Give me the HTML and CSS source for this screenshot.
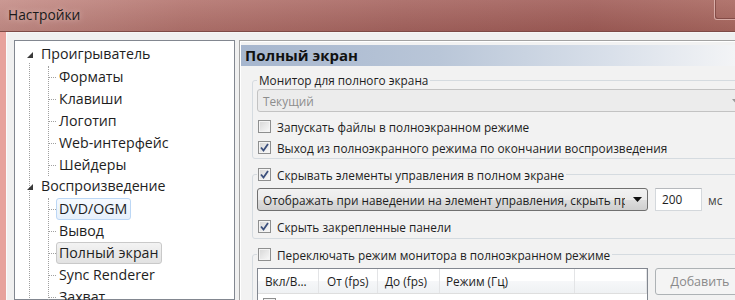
FILE: index.html
```html
<!DOCTYPE html>
<html lang="ru">

<head>
    <meta charset="UTF-8">
    <meta name="viewport" content="width=device-width, initial-scale=1.0">
    <title>Настройки</title>
    <link rel="stylesheet" href="styles.css">
</head>

<body>
    <div class="titlebar">
        <span class="title">Настройки</span>
        <span class="close"></span>
    </div>
    <div class="frame">
        <div class="client">
            <!-- дерево разделов -->
            <div class="tree">
                <div class="node root"><span class="exp"><svg width="6" height="6" viewBox="0 0 6 6"><polygon points="6,0 6,6 0,6" fill="#3a3a3a"/></svg></span><span class="label">Проигрыватель</span></div>
                <div class="children">
                    <div class="node"><span class="label">Форматы</span></div>
                    <div class="node"><span class="label">Клавиши</span></div>
                    <div class="node"><span class="label">Логотип</span></div>
                    <div class="node"><span class="label">Web-интерфейс</span></div>
                    <div class="node"><span class="label">Шейдеры</span></div>
                </div>
                <div class="node root"><span class="exp"><svg width="6" height="6" viewBox="0 0 6 6"><polygon points="6,0 6,6 0,6" fill="#3a3a3a"/></svg></span><span class="label">Воспроизведение</span></div>
                <div class="children">
                    <div class="node"><span class="label hot">DVD/OGM</span></div>
                    <div class="node"><span class="label">Вывод</span></div>
                    <div class="node"><span class="label sel">Полный экран</span></div>
                    <div class="node"><span class="label">Sync Renderer</span></div>
                    <div class="node"><span class="label">Захват</span></div>
                </div>
            </div>

            <!-- страница настроек -->
            <div class="page">
                <div class="head">Полный экран</div>

                <fieldset class="group first">
                    <legend class="caption">Монитор для полного экрана</legend>
                    <div class="combo disabled">
                        <span>Текущий</span>
                        <svg class="arrow" width="7" height="4" viewBox="0 0 7 4"><polygon points="0,0 7,0 3.5,4" fill="#9a9a9a"/></svg>
                    </div>
                    <div class="check"><span class="box"></span>Запускать файлы в полноэкранном режиме</div>
                    <div class="check"><span class="box"><svg width="11" height="11" viewBox="0 0 11 11"><path d="M2 5.5 L4.5 8.5 L9 2" fill="none" stroke="#3b4f7c" stroke-width="1.8"/></svg></span>Выход из полноэкранного режима по окончании воспроизведения</div>
                </fieldset>

                <fieldset class="group">
                    <legend class="check"><span class="box"><svg width="11" height="11" viewBox="0 0 11 11"><path d="M2 5.5 L4.5 8.5 L9 2" fill="none" stroke="#3b4f7c" stroke-width="1.8"/></svg></span>Скрывать элементы управления в полном экране</legend>
                    <div class="line">
                        <div class="combo">
                            <span class="text">Отображать при наведении на элемент управления, скрыть при</span>
                            <svg class="arrow" width="9" height="5" viewBox="0 0 9 5"><polygon points="0,0 9,0 4.5,5" fill="#111"/></svg>
                        </div>
                        <div class="edit">200</div>
                        <span class="unit">мс</span>
                    </div>
                    <div class="check"><span class="box"><svg width="11" height="11" viewBox="0 0 11 11"><path d="M2 5.5 L4.5 8.5 L9 2" fill="none" stroke="#3b4f7c" stroke-width="1.8"/></svg></span>Скрыть закрепленные панели</div>
                </fieldset>

                <fieldset class="group">
                    <legend class="check"><span class="box"></span>Переключать режим монитора в полноэкранном режиме</legend>
                    <div class="line">
                        <div class="list">
                            <div class="cols">
                                <span class="col c1">Вкл/В...</span>
                                <span class="col c2">От (fps)</span>
                                <span class="col c3">До (fps)</span>
                                <span class="col c4">Режим (Гц)</span>
                                <span class="col c5"></span>
                            </div>
                            <div class="row"><span class="box"></span></div>
                        </div>
                        <button type="button" class="btn" disabled>Добавить</button>
                    </div>
                </fieldset>
            </div>
        </div>
    </div>
</body>

</html>
```

FILE: styles.css
```css
body{
    margin: 0;
    width: 735px;
    height: 300px;
    overflow: hidden;
    font-family: "Open Sans", "Noto Sans", sans-serif;
    color: #1e1e1e;
    background-color: #e7a29c;
}
.titlebar{
    height: 32px;
    box-sizing: border-box;
    display: flex;
    justify-content: space-between;
    align-items: flex-start;
    border-bottom: 1px solid #7e4a46;
    background: linear-gradient(to bottom, rgba(255,255,255,.1), rgba(0,0,0,.06)),
        linear-gradient(to right, #c58d87, #b3736d 25%, #a6645f 55%, #a05c57 80%, #a9675f);
}
.title{
    font-size: 13.8px;
    line-height: 29px;
    padding-left: 8px;
    color: #1a1a1a;
    text-shadow: 0 0 6px rgba(255,235,230,.6);
}
.close{
    width: 20px;
    height: 19px;
    border-left: 1px solid rgba(255,225,220,.55);
    border-bottom: 1px solid rgba(255,225,220,.55);
    border-bottom-left-radius: 3px;
    box-shadow: inset 1px -1px 0 rgba(90,40,38,.45);
}
.frame{
    height: 268px;
    padding-left: 6px;
}
.client{
    height: 100%;
    box-sizing: border-box;
    display: flex;
    padding: 7px 0 0 7px;
    border-left: 1px solid #fbfbfb;
    border-top: 1px solid #f6f6f6;
    background-color: #f0f0f0;
}

/* дерево */
.tree{
    width: 221px;
    flex-shrink: 0;
    box-sizing: border-box;
    padding-top: 3px;
    border: 1px solid #828790;
    font-size: 14.2px;
    background: linear-gradient(#fff, #fff) 0 0 / 100% 21px no-repeat,
        linear-gradient(#a0a0a0 50%, transparent 50%) 14px 0 / 1px 2px repeat-y,
        #fff;
}
.node{
    display: flex;
    align-items: center;
    height: 22px;
}
.exp{
    width: 26px;
    box-sizing: border-box;
    padding-left: 12px;
    display: flex;
    align-items: center;
}
.root .label{
    padding: 0;
    border: none;
}
.children{
    margin-left: 33px;
    border-left: 1px dotted #a0a0a0;
}
.children .node::before{
    content: "";
    width: 7px;
    border-top: 1px dotted #a0a0a0;
}
.label{
    height: 22px;
    box-sizing: border-box;
    line-height: 20px;
    padding: 0 3px 0 2px;
    border: 1px solid transparent;
    border-radius: 3px;
    white-space: nowrap;
}
.label.hot{
    border-color: #bcd7f5;
    background: linear-gradient(#f6fafe, #e6f0fb);
}
.label.sel{
    border-color: #c9c9c9;
    background: linear-gradient(#f3f3f3, #e2e2e2);
}

/* правая часть */
.page{
    flex: 1;
    min-width: 0;
    overflow: hidden;
    margin-left: 4px;
    padding: 4px 0 0 1px;
    border-left: 1px solid #a3a3a3;
    border-top: 1px solid #a3a3a3;
    box-shadow: inset 1px 1px 0 #fff;
    background-color: #f2f2f2;
    font-size: 11.8px;
}
.head{
    height: 21px;
    line-height: 21px;
    padding-left: 4px;
    font-size: 15px;
    font-weight: bold;
    color: #111;
    background: linear-gradient(to right, #a6b6ce, #b9c6d8 40%, #d9e0ea 75%, #f3f4f6);
}
.group{
    margin: 7px -80px 0 11px;
    padding: 0 0 0 4px;
    min-width: 0;
    border: 1px solid #d5dbe0;
    border-radius: 3px;
}
.group.first{
    margin-top: 6px;
}
.caption{
    padding: 0 2px;
    line-height: 16px;
}
legend.check{
    padding: 0 2px 0 1px;
    height: 17px;
}
.check{
    display: flex;
    align-items: center;
    gap: 6px;
    height: 21px;
    padding-left: 1px;
    white-space: nowrap;
}
.box{
    width: 13px;
    height: 13px;
    box-sizing: border-box;
    flex-shrink: 0;
    display: flex;
    align-items: center;
    justify-content: center;
    border: 1px solid #8e8f8f;
    box-shadow: inset 0 0 0 1px #f4f4f4;
    background: linear-gradient(135deg, #d6d6d6, #fafafa);
}
.combo{
    height: 23px;
    box-sizing: border-box;
    display: flex;
    align-items: center;
    justify-content: space-between;
    padding: 0 5px 0 5px;
    border: 1px solid #707070;
    border-radius: 3px;
    background: linear-gradient(#f2f2f2, #ebebeb 50%, #dddddd 51%, #cfcfcf);
    white-space: nowrap;
}
.combo.disabled{
    width: 488px;
    margin: 1px 0 4px;
    color: #8d8d8d;
    border-color: #c3c3c3;
    background: #ececec;
}
.line{
    display: flex;
    align-items: center;
    margin-top: 5px;
}
.line .combo{
    width: 391px;
    flex-shrink: 0;
}
.text{
    overflow: hidden;
    margin-right: 8px;
}
.arrow{
    flex-shrink: 0;
}
.edit{
    width: 47px;
    height: 23px;
    box-sizing: border-box;
    flex-shrink: 0;
    margin-left: 7px;
    padding-left: 6px;
    line-height: 21px;
    border: 1px solid #d4d8dc;
    border-top-color: #b6b9bd;
    background-color: #fff;
}
.unit{
    margin-left: 6px;
    color: #444;
}
.group .line + .check{
    margin-top: 5px;
    margin-bottom: 1px;
}

/* список режимов */
.list{
    width: 391px;
    height: 40px;
    flex-shrink: 0;
    align-self: flex-start;
    box-sizing: border-box;
    border: 1px solid #828790;
    background-color: #fff;
}
.cols{
    display: flex;
    height: 24px;
    border-bottom: 1px solid #dedede;
    background: linear-gradient(#fff, #fff 50%, #f6f7f9 50%, #eff1f3);
}
.col{
    box-sizing: border-box;
    padding-left: 7px;
    line-height: 24px;
    border-right: 1px solid #e3e4e6;
    white-space: nowrap;
}
.c1{ width: 61px; }
.c2{ width: 59px; padding-left: 8px; }
.c3{ width: 62px; }
.c4{ width: 135px; padding-left: 6px; }
.c5{ flex: 1; }
.row{
    padding: 4px 0 0 5px;
}
.btn{
    width: 90px;
    height: 27px;
    flex-shrink: 0;
    align-self: flex-start;
    margin-left: 7px;
    font-family: inherit;
    font-size: 12.5px;
    color: #8a8a8a;
    border: 1px solid #adb2b5;
    border-radius: 3px;
    background-color: #f4f4f4;
}
```
